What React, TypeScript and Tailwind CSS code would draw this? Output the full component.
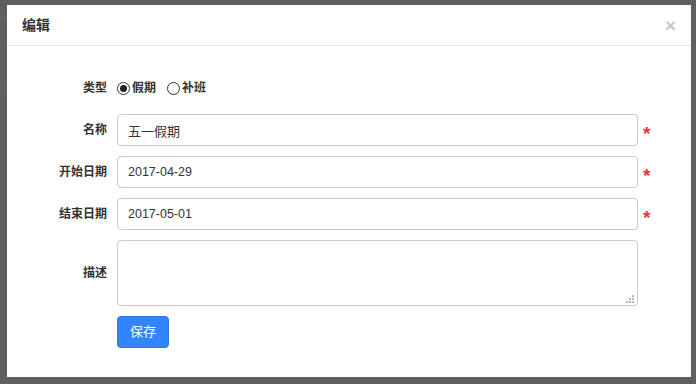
import React from "react";

const font = { fontFamily: '"Liberation Sans", Arial, "Noto Sans CJK SC", sans-serif' };

function Radio({ checked, label }: { checked?: boolean; label: string }) {
  return (
    <label className="flex items-center gap-[2px]">
      <span className="flex h-[13px] w-[13px] items-center justify-center rounded-full border border-[#333] bg-white">
        {checked && <span className="h-[7px] w-[7px] rounded-full bg-[#222]" />}
      </span>
      <span className="text-[12px] font-bold text-[#333]">{label}</span>
    </label>
  );
}

function Row({ label, children, required, tall }: { label: string; children: React.ReactNode; required?: boolean; tall?: boolean }) {
  return (
    <div className={`flex items-center ${tall ? "h-[66px]" : "h-[32px]"}`}>
      <div className="w-[100px] text-right text-[12px] font-bold text-[#333]">{label}</div>
      <div className="relative ml-[10px] flex h-full w-[521px]">{children}</div>
      {required && <span className="ml-[5px] mt-[6px] text-[19px] font-bold leading-none text-[#e53935]">*</span>}
    </div>
  );
}

export default function App() {
  return (
    <div className="relative h-[384px] w-[696px] overflow-hidden bg-[#5f5f5f]" style={font}>
      <div className="h-[17px] border-b border-[#676767]" />
      <div className="h-[72px] border-b-2 border-[#666]" />
      <div className="absolute left-[7px] top-[5px] flex h-[372px] w-[684px] flex-col bg-white">
        <div className="flex h-[41px] items-center justify-between border-b border-[#e5e5e5] pl-[15px] pr-[15px]">
          <span className="text-[14px] font-bold text-[#333]">编辑</span>
          <span className="text-[19px] font-bold leading-none text-[#c8c8c8]">×</span>
        </div>
        <div className="flex flex-col gap-[10px] pt-[26px]">
          <div className="flex h-[32px] items-center">
            <div className="w-[100px] text-right text-[12px] font-bold text-[#333]">类型</div>
            <div className="ml-[10px] flex items-center gap-[11px]">
              <Radio checked label="假期" />
              <Radio label="补班" />
            </div>
          </div>
          <Row label="名称" required>
            <input
              readOnly
              value="五一假期"
              className="h-full w-full rounded-[4px] border border-[#ccc] px-[10px] text-[13px] text-[#333] outline-none"
            />
          </Row>
          <Row label="开始日期" required>
            <input
              readOnly
              value="2017-04-29"
              className="h-full w-full rounded-[4px] border border-[#ccc] px-[10px] text-[12.5px] text-[#333] outline-none"
            />
          </Row>
          <Row label="结束日期" required>
            <input
              readOnly
              value="2017-05-01"
              className="h-full w-full rounded-[4px] border border-[#ccc] px-[10px] text-[12.5px] text-[#333] outline-none"
            />
          </Row>
          <Row label="描述" tall>
            <textarea className="h-full w-full resize-none rounded-[4px] border border-[#ccc] px-[10px] text-[13px] outline-none" />
            <svg className="absolute bottom-[3px] right-[3px]" width="9" height="8" viewBox="0 0 9 8" fill="#b5b5b5">
              <rect x="6" y="0" width="2" height="2" />
              <rect x="3" y="3" width="2" height="2" />
              <rect x="6" y="3" width="2" height="2" />
              <rect x="0" y="6" width="2" height="2" />
              <rect x="3" y="6" width="2" height="2" />
              <rect x="6" y="6" width="2" height="2" />
            </svg>
          </Row>
          <div className="flex h-[32px]">
            <button className="ml-[110px] h-[32px] w-[52px] rounded-[4px] border border-[#2e74e0] bg-[#3385ff] text-[13px] text-white">
              保存
            </button>
          </div>
        </div>
      </div>
    </div>
  );
}
